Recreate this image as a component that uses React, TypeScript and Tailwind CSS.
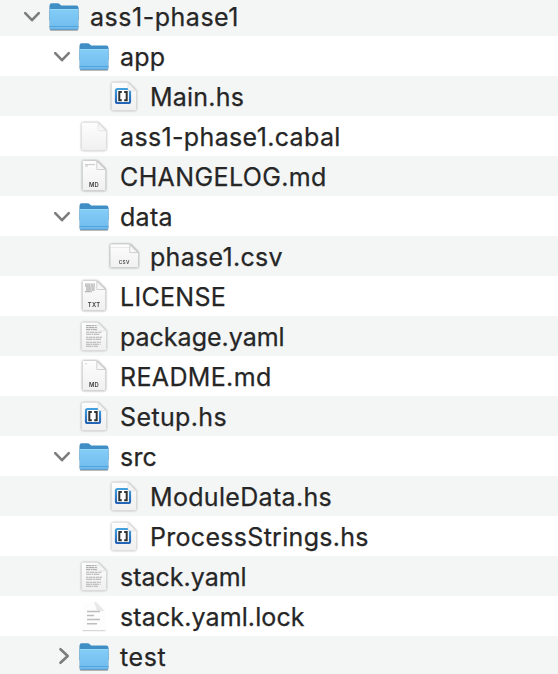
import React from "react";

type Kind = "folder" | "hs" | "blank" | "md" | "mdHeading" | "csv" | "txt" | "yaml" | "lock";

interface Entry {
  name: string;
  kind: Kind;
  level: 0 | 1 | 2;
  open?: boolean;
  tracking: string;
}

const entries: Entry[] = [
  { name: "ass1-phase1", kind: "folder", level: 0, open: true, tracking: "tracking-[0.52px]" },
  { name: "app", kind: "folder", level: 1, open: true, tracking: "tracking-[0.2px]" },
  { name: "Main.hs", kind: "hs", level: 2, tracking: "tracking-[0.2px]" },
  { name: "ass1-phase1.cabal", kind: "blank", level: 1, tracking: "tracking-[0.35px]" },
  { name: "CHANGELOG.md", kind: "mdHeading", level: 1, tracking: "tracking-[0.38px]" },
  { name: "data", kind: "folder", level: 1, open: true, tracking: "tracking-[0.3px]" },
  { name: "phase1.csv", kind: "csv", level: 2, tracking: "tracking-[0.3px]" },
  { name: "LICENSE", kind: "txt", level: 1, tracking: "tracking-[0.3px]" },
  { name: "package.yaml", kind: "yaml", level: 1, tracking: "tracking-[0px]" },
  { name: "README.md", kind: "md", level: 1, tracking: "tracking-[0.35px]" },
  { name: "Setup.hs", kind: "hs", level: 1, tracking: "tracking-[0.38px]" },
  { name: "src", kind: "folder", level: 1, open: true, tracking: "tracking-[0.2px]" },
  { name: "ModuleData.hs", kind: "hs", level: 2, tracking: "tracking-[0.32px]" },
  { name: "ProcessStrings.hs", kind: "hs", level: 2, tracking: "tracking-[0.3px]" },
  { name: "stack.yaml", kind: "yaml", level: 1, tracking: "tracking-[0px]" },
  { name: "stack.yaml.lock", kind: "lock", level: 1, tracking: "tracking-[0.12px]" },
  { name: "test", kind: "folder", level: 1, open: false, tracking: "tracking-[0.6px]" },
];

const indent = { 0: "pl-[20px]", 1: "pl-[50px]", 2: "pl-[80px]" };

function Gradients() {
  return (
    <svg width="0" height="0" className="absolute">
      <defs>
        <linearGradient id="folderFront" x1="0" y1="0" x2="0" y2="1">
          <stop offset="0" stopColor="#84cdf7" />
          <stop offset="1" stopColor="#6fbbee" />
        </linearGradient>
        <linearGradient id="paper" x1="0" y1="0" x2="0" y2="1">
          <stop offset="0" stopColor="#fdfdfd" />
          <stop offset="1" stopColor="#f0f0f0" />
        </linearGradient>
        <linearGradient id="fold" x1="0" y1="1" x2="1" y2="0">
          <stop offset="0" stopColor="#ffffff" />
          <stop offset="0.55" stopColor="#f1f1f1" />
          <stop offset="1" stopColor="#cfcfcf" />
        </linearGradient>
        <linearGradient id="badge" x1="0" y1="0" x2="0" y2="1">
          <stop offset="0" stopColor="#439fdd" />
          <stop offset="1" stopColor="#2464b6" />
        </linearGradient>
      </defs>
    </svg>
  );
}

function Folder() {
  return (
    <svg width="32" height="32" viewBox="0 0 32 32" className="shrink-0 drop-shadow-[0_1px_0.7px_rgba(0,0,0,0.35)]">
      <path d="M1.6 5.2Q1.6 3.2 3.6 3.2H9.6Q10.8 3.2 11.6 4L12.5 4.9Q13.2 5.6 14.4 5.6H28.4Q30.4 5.6 30.4 7.6V20H1.6Z" fill="#3f8fc6" />
      <path d="M1.6 9.4Q1.6 9 2.4 9H29.6Q30.4 9 30.4 9.4V28Q30.4 29.6 28.8 29.6H3.2Q1.6 29.6 1.6 28Z" fill="url(#folderFront)" />
      <path d="M2 9.5H30" stroke="#97d9fc" strokeWidth="1" />
      <path d="M1.6 26.5H30.4" stroke="#4b9dd5" strokeWidth="0.8" />
      <path d="M2.2 29.3H29.8" stroke="#4b94c6" strokeWidth="0.7" />
    </svg>
  );
}

function Label({ text, x, y, size }: { text: string; x: number; y: number; size: number }) {
  return (
    <text x={x} y={y} fontSize={size} textAnchor="middle" fontFamily="Inter, sans-serif" fontWeight="600" letterSpacing="0.35" fill="#3c3c3c">
      {text}
    </text>
  );
}

/* Rounded document used by generic and editor-owned files. */
function SoftPage({ children }: { children?: React.ReactNode }) {
  return (
    <svg width="32" height="32" viewBox="0 0 32 32" className="shrink-0 drop-shadow-[0_0.5px_0.9px_rgba(0,0,0,0.4)]">
      <path d="M5.3 2.5H20L28.3 10.8V28.7Q28.3 30.5 26.5 30.5H5.3Q3.5 30.5 3.5 28.7V4.3Q3.5 2.5 5.3 2.5Z" fill="url(#paper)" />
      {children}
      <path d="M20 2.7V9Q20 10.8 21.8 10.8H28.1Z" fill="url(#fold)" stroke="#d2d2d2" strokeWidth="0.5" />
    </svg>
  );
}

/* Square-cornered document with the file type printed at its foot. */
function TypedPage({ children }: { children?: React.ReactNode }) {
  return (
    <svg width="32" height="32" viewBox="0 0 32 32" className="shrink-0 overflow-visible drop-shadow-[0_0.8px_1px_rgba(0,0,0,0.55)]">
      <path d="M4.5 0.8H19L27.5 9.3V30.5H4.5Z" fill="url(#paper)" />
      {children}
      <path d="M18.8 1V9.5H27.3Z" fill="url(#fold)" stroke="#b5b5b5" strokeWidth="0.6" />
    </svg>
  );
}

function FileIcon({ kind }: { kind: Kind }) {
  switch (kind) {
    case "folder":
      return <Folder />;
    case "blank":
      return <SoftPage />;
    case "hs":
      return (
        <SoftPage>
          <rect x="8" y="9" width="14" height="14" rx="1.6" fill="#ffffff" stroke="url(#badge)" strokeWidth="2.2" />
          <path d="M13.8 12H11.3V20.2H13.8M16.2 12H18.7V20.2H16.2" fill="none" stroke="#303030" strokeWidth="2" />
        </SoftPage>
      );
    case "yaml":
      return (
        <SoftPage>
          <g stroke="#b0b0b0" strokeWidth="1.1" fill="none">
            <path d="M8 5.6H18.6" strokeDasharray="5 .4 3 .5" />
            <path d="M8 7.6H19" strokeDasharray="2 .4 6 .5" />
            <path d="M8 9.6H19" strokeDasharray="4 .6 2 .4" />
            <path d="M8 12.3H23.5" strokeDasharray="3 .5 5 .4" />
            <path d="M8 14.3H22" strokeDasharray="5 .6 2 .4" />
            <path d="M8 17.3H24" strokeDasharray="2 .6 4 .4" />
            <path d="M8 19.3H23" strokeDasharray="6 .5 3 .4" />
            <path d="M8 22.3H23" strokeDasharray="3 .6 3 .4" />
            <path d="M8 24.3H22.5" strokeDasharray="4 .4 2 .6" />
            <path d="M8 26.3H20" strokeDasharray="5 .4 2 .6" />
          </g>
        </SoftPage>
      );
    case "lock":
      return (
        <svg width="32" height="32" viewBox="0 0 32 32" className="shrink-0">
          <path d="M5 2H18L27.5 11.5V31H5Z" fill="#fdfdfd" />
          <path d="M16 2H18L27 11H21.5Q18 11 18 7.5Z" fill="#e9e9e9" />
          <path d="M4.5 30.7H27.5" stroke="#c4c4c4" strokeWidth="0.8" />
          <path d="M9 11.5H22M9 15.5H16M9 19.5H22M9 23.7H19" stroke="#bdbdbd" strokeWidth="1.5" />
        </svg>
      );
    case "md":
    case "mdHeading":
      return (
        <TypedPage>
          {kind === "mdHeading" ? (
            <path d="M7 4.6H17M7 6H10" stroke="#b2b2b2" strokeWidth="0.7" />
          ) : (
            <path d="M7 3.8H9" stroke="#bbbbbb" strokeWidth="0.6" />
          )}
          <Label text="MD" x={16} y={27} size={5.8} />
        </TypedPage>
      );
    case "txt":
      return (
        <TypedPage>
          <path d="M7 4.2H17M7 6H17M8 8H17M8 10H17M7 11.6H14" stroke="#b7b7b7" strokeWidth="1.3" strokeDasharray="5 .4 3 .3" />
          <Label text="TXT" x={16.2} y={27} size={5.8} />
        </TypedPage>
      );
    case "csv":
      return (
        <svg width="32" height="32" viewBox="0 0 32 32" className="shrink-0 drop-shadow-[0_0.8px_1px_rgba(0,0,0,0.55)]">
          <path d="M2.3 4.3H22L30.3 12.6V27.5H2.3Z" fill="url(#paper)" />
          <path d="M3 7.5H21.8" stroke="#dedede" strokeWidth="0.6" />
          <path d="M21.8 4.5V12.6H30Z" fill="url(#fold)" stroke="#b5b5b5" strokeWidth="0.6" />
          <Label text="CSV" x={16.2} y={24} size={4.7} />
        </svg>
      );
  }
}

function Chevron({ open }: { open?: boolean }) {
  return (
    <svg width="24" height="24" viewBox="0 0 24 24" fill="none" stroke="#7c7c7c" strokeWidth="2.6" strokeLinecap="round" strokeLinejoin="round" className="shrink-0">
      {open ? <path d="M5.2 9.2L12 16.2L18.8 9.2" /> : <path d="M10.5 5.2L17.7 12L10.5 18.8" />}
    </svg>
  );
}

export default function App() {
  return (
    <div className="h-[674px] w-[558px] overflow-hidden bg-white font-['Inter',sans-serif]">
      <Gradients />
      <ul className="-mt-1">
        {entries.map((e) => (
          <li key={e.name} className={`flex h-10 items-center odd:bg-[#f4f5f5] ${indent[e.level]}`}>
            <span className="mr-1 h-6 w-6 shrink-0">{e.kind === "folder" && <Chevron open={e.open} />}</span>
            <FileIcon kind={e.kind} />
            <span
              className={`ml-2.5 whitespace-nowrap pt-0.5 text-[25px] leading-[38px] text-[#262626] [-webkit-text-stroke:0.25px_#262626] ${e.tracking}`}
            >
              {e.name}
            </span>
          </li>
        ))}
      </ul>
    </div>
  );
}
